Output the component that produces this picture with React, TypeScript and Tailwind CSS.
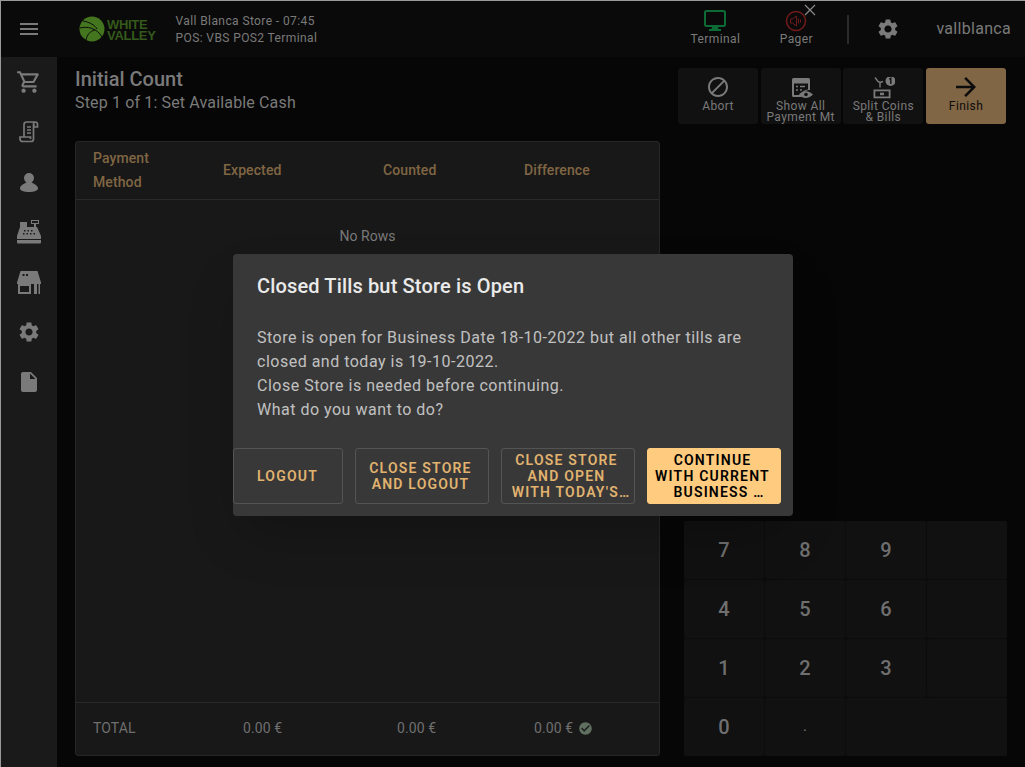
import { MdArrowForward, MdBlock, MdCheckCircle, MdInsertDriveFile, MdMenu, MdOutlineShoppingCart, MdSettings } from "react-icons/md";

function Logo() {
  return (
    <div className="flex items-center">
      <svg width="28" height="28" viewBox="0 0 28 28">
        <circle cx="14" cy="14" r="12.5" fill="#44761f" />
        <path d="M2 13c7-2 17 0 22 9M5 6c6 1 12 4 14 8M8 25c1-5 4-9 9-10" fill="none" stroke="#0a0a0a" strokeWidth="1" />
      </svg>
      <div className="mt-[2px] ml-[1px] font-['Liberation_Sans',sans-serif] text-[13px] leading-[11px] font-bold tracking-[-0.3px] text-[#34591b]">
        <div>WHITE</div>
        <div>VALLEY</div>
      </div>
    </div>
  );
}

function TerminalIcon() {
  return (
    <svg width="24" height="22" viewBox="0 0 24 22" fill="none">
      <rect x="2" y="1" width="20" height="15" rx="1.5" stroke="#0d6b35" strokeWidth="2" />
      <path d="M9 17h6l.5 2H18v2H6v-2h2.500z" fill="#0d6b35" />
    </svg>
  );
}

function PagerIcon() {
  return (
    <svg width="22" height="22" viewBox="0 0 22 22" fill="none">
      <circle cx="11" cy="11" r="9.5" stroke="#6e1a1a" strokeWidth="1.6" />
      <path d="M5.5 9v4h2l4 3V6l-4 3z" stroke="#6e1a1a" strokeWidth="1" />
      <path d="M13.500 8.500v5M15.500 9.500v3" stroke="#6e1a1a" strokeWidth="1" />
    </svg>
  );
}

function ReceiptIcon() {
  return (
    <svg width="20" height="22" viewBox="0 0 20 22" fill="none" stroke="#7a7a7a" strokeWidth="1.7">
      <path d="M5 16V3.500C5 2 6 1 7.500 1H16c1.400 0 2.500 1 2.500 2.500V6h-3.500V3.500M16 1c-1 0-1.500 1-1.500 2.500V18c0 1.500-1 2.500-2.500 2.500H3.500C2 20.500 1 19.500 1 18v-2h10.500v2" />
      <path d="M8 6h4M8 9h4M8 12h4" />
    </svg>
  );
}

function PersonIcon() {
  return (
    <svg width="18" height="20" viewBox="0 0 18 20" fill="#7a7a7a">
      <circle cx="9" cy="6" r="5" />
      <path d="M6.500 10h5c0 1.500 6.500 2.200 6.500 6.500 0 2.200-4 3.500-9 3.500s-9-1.300-9-3.500C0 12.200 6.500 11.500 6.500 10z" />
    </svg>
  );
}

function RegisterIcon() {
  return (
    <svg width="24" height="24" viewBox="0 0 24 24" fill="#7a7a7a">
      <path d="M3 2h7v5H3z" />
      <path fillRule="evenodd" d="M14 0h8v4h-3v3h-2V4h-3zM15 1v2h6V1z" />
      <path fillRule="evenodd" d="M3 7h17l4 9v3H0v-3zM7 10v1.500h1.500V10zM10.500 10v1.500H12V10zM14 10v1.500h1.500V10zM6 13v1.500h1.500V13zM9.500 13v1.500H11V13zM13 13v1.500h1.500V13zM16.500 13v1.500H18V13z" />
      <path d="M0 20h24v2.500a1 1 0 0 1-1 1H1a1 1 0 0 1-1-1z" />
    </svg>
  );
}

function StoreIcon() {
  return (
    <svg width="24" height="23" viewBox="0 0 24 23" fill="#7a7a7a">
      <path fillRule="evenodd" d="M3.500 0h17L24 11.500V13H0v-1.500zM5.500 3v2h2V3zM9 3v2h2V3z" />
      <path fillRule="evenodd" d="M1 13h13v10H1zM3 15v6h9v-6z" />
      <path d="M17 13h3v10h-3zM21.500 13H23v10h-1.500z" />
    </svg>
  );
}

function PaymentIcon() {
  return (
    <svg width="24" height="22" viewBox="0 0 24 22" fill="none">
      <path d="M3 2.500A1.500 1.500 0 0 1 4.500 1h15A1.500 1.500 0 0 1 21 2.500V13c-4 0-7 2-8.500 7h-8A1.500 1.500 0 0 1 3 18.500z" fill="#7a7a7a" />
      <path d="M5 6.500h14v6c-3 .3-6 2-7.500 5.500H5z" fill="#111111" />
      <path d="M7 9.500h2M11 9.500h5M7 13h2M11 13h2" stroke="#7a7a7a" strokeWidth="1.3" />
      <path d="M10 17.500c3-4.500 10-4.500 14 0-4 4.500-11 4.500-14 0z" fill="#7a7a7a" />
      <circle cx="17" cy="17.500" r="1.800" fill="#111111" />
    </svg>
  );
}

function SplitIcon() {
  return (
    <svg width="24" height="22" viewBox="0 0 24 22" fill="none">
      <path d="M4 0.500l3 4 2 1M9 5.500l3-1M9 5.500v5" stroke="#7a7a7a" strokeWidth="1.4" />
      <circle cx="19.500" cy="4" r="5" fill="#7a7a7a" />
      <path d="M18.200 2.200l1.600-.8v5.500" stroke="#111111" strokeWidth="1.4" />
      <rect x="3.400" y="13.400" width="15.200" height="7" stroke="#7a7a7a" strokeWidth="1.8" />
      <rect x="9" y="15.700" width="4" height="2.500" fill="#7a7a7a" />
    </svg>
  );
}

function ToolButton({ icon, label, finish }: { icon: React.ReactNode; label: string[]; finish?: boolean }) {
  return (
    <button className={`flex h-[56px] w-[80px] flex-col items-center rounded-[3px] ${finish ? "bg-[#806644] text-[#0c0c0c]" : "bg-[#111111] text-[#7a7a7a]"}`}>
      <div className="flex h-[31px] items-end justify-center">{icon}</div>
      <div className="mt-[2px] text-[12px] leading-[11px] tracking-[0.4px]">
        {label.map((l) => (
          <div key={l}>{l}</div>
        ))}
      </div>
    </button>
  );
}

function DialogButton({ lines, primary, width, lastClass }: { lines: string[]; primary?: boolean; width: string; lastClass?: string }) {
  return (
    <button
      className={`flex h-[56px] flex-col justify-center rounded-[3px] border text-center text-[14px] leading-[16px] font-semibold tracking-[1.2px] ${width} ${
        primary ? "border-[#ffcb7e] bg-[#ffcb7e] text-black" : "border-[#545454] text-[#e1b36f]"
      }`}
    >
      {lines.map((l, i) => (
        <div key={l} className={i === lines.length - 1 && lastClass ? lastClass : "pr-[3px]"}>
          {l}
        </div>
      ))}
    </button>
  );
}

export default function App() {
  const keys = ["7", "8", "9", "", "4", "5", "6", "", "1", "2", "3", ""];

  return (
    <div className="relative flex h-screen w-full flex-col overflow-hidden border-t border-l border-[#9a9a9a] bg-[#060606] font-['Roboto',sans-serif] text-[#7a7a7a]">
      {/* Header */}
      <header className="flex h-[56px] shrink-0 items-center bg-[#0a0a0a]">
        <div className="flex w-[56px] justify-center">
          <MdMenu size={24} />
        </div>
        <div className="ml-[21px]">
          <Logo />
        </div>
        <div className="mt-[2px] ml-[20px] text-[12px] leading-[17px] tracking-[0.4px]">
          <div>Vall Blanca Store - 07:45</div>
          <div>POS: VBS POS2 Terminal</div>
        </div>
        <div className="ml-auto flex items-center">
          <div className="flex w-[60px] -translate-y-[1px] flex-col items-center">
            <TerminalIcon />
            <span className="text-[12px] leading-[14px] tracking-[0.4px]">Terminal</span>
          </div>
          <div className="relative ml-[21px] flex w-[60px] -translate-y-[1px] flex-col items-center">
            <PagerIcon />
            <span className="text-[12px] leading-[14px] tracking-[0.4px]">Pager</span>
            <svg className="absolute top-[-7px] left-[37px]" width="14" height="14" viewBox="0 0 14 14" stroke="#8a8a8a" strokeWidth="1.2">
              <path d="M2 2l10 10M12 2L2 12" />
            </svg>
          </div>
          <div className="ml-[21px] h-[29px] w-[2px] bg-[#2a2a2a]" />
          <div className="ml-[27px]">
            <MdSettings size={24} />
          </div>
          <span className="mr-[14px] ml-[36px] text-[16px] tracking-[0.3px]">vallblanca</span>
        </div>
      </header>

      <div className="flex min-h-0 flex-1">
        {/* Sidebar */}
        <nav className="flex w-[56px] shrink-0 flex-col items-center bg-[#1a1a1a]">
          {[
            <MdOutlineShoppingCart size={26} color="#7a7a7a" />,
            <ReceiptIcon />,
            <PersonIcon />,
            <RegisterIcon />,
            <StoreIcon />,
            <MdSettings size={24} color="#7a7a7a" />,
            <MdInsertDriveFile size={24} color="#7a7a7a" />,
          ].map((icon, i) => (
            <div key={i} className="flex h-[50px] w-full items-center justify-center pr-[1px]">
              {icon}
            </div>
          ))}
        </nav>

        <main className="flex min-w-0 flex-1 flex-col px-[18px]">
          {/* Title row */}
          <div className="flex h-[84px] shrink-0 items-start justify-between">
            <div className="pt-[10px]">
              <div className="text-[20px] leading-[24px] font-medium">Initial Count</div>
              <div className="mt-[1px] text-[16px] leading-[22px] tracking-[0.15px]">Step 1 of 1: Set Available Cash</div>
            </div>
            <div className="mt-[11px] mr-[1px] flex gap-[2.67px]">
              <ToolButton icon={<MdBlock size={24} />} label={["Abort"]} />
              <ToolButton icon={<PaymentIcon />} label={["Show All", "Payment Mt"]} />
              <ToolButton icon={<SplitIcon />} label={["Split Coins", "& Bills"]} />
              <ToolButton finish icon={<MdArrowForward className="translate-y-[3px]" size={30} />} label={["Finish"]} />
            </div>
          </div>

          <div className="flex min-h-0 flex-1 pb-[11px]">
            {/* Table card */}
            <section className="flex w-[585px] shrink-0 flex-col rounded-[3px] border border-[#262626] bg-[#181818] text-[14px]">
              <div className="grid h-[58px] shrink-0 grid-cols-[131px_152px_152px_1fr] items-center border-b border-[#2a2a2a] font-medium tracking-[0.1px] text-[#806644]">
                <div className="-mt-[2px] pl-[17px] leading-[24px]">
                  Payment
                  <br />
                  Method
                </div>
                <div className="pl-[16px]">Expected</div>
                <div className="pl-[24px]">Counted</div>
                <div className="pl-[13px]">Difference</div>
              </div>
              <div className="flex-1 pt-[28px] text-center leading-[16px]">No Rows</div>
              <div className="grid h-[53px] shrink-0 grid-cols-[131px_152px_152px_1fr] items-center border-t border-[#2a2a2a] pb-[2px] tracking-[0.1px] text-[#6f6f6f]">
                <div className="pl-[17px]">TOTAL</div>
                <div className="pl-[36px]">0.00 €</div>
                <div className="pl-[38px]">0.00 €</div>
                <div className="flex items-center pl-[23px]">
                  0.00 €
                  <MdCheckCircle className="ml-[5px]" size={15} color="#5f6f60" />
                </div>
              </div>
            </section>

            {/* Keypad */}
            <div className="mt-auto ml-[24px] grid h-[235px] w-[323px] shrink-0 grid-cols-4 grid-rows-4 gap-[1px] bg-[#0c0c0c] text-[20px] font-medium text-[#6f6f6f]">
              {keys.map((k, i) => (
                <div key={i} className="flex items-center justify-center rounded-[2px] bg-[#111111]">
                  {k}
                </div>
              ))}
              <div className="flex items-center justify-center rounded-[2px] bg-[#111111]">0</div>
              <div className="flex items-center justify-center rounded-[2px] bg-[#111111] text-[12px]">.</div>
              <div className="col-span-2 rounded-[2px] bg-[#111111]" />
            </div>
          </div>
        </main>
      </div>

      {/* Dialog */}
      <div className="absolute inset-0 flex items-center justify-center pt-[1px]">
        <div className="h-[262px] w-[560px] rounded-[4px] bg-[#383838] shadow-2xl">
          <h2 className="px-[24px] pt-[20px] text-[20px] leading-[24px] font-medium tracking-[0.15px] text-white/90">Closed Tills but Store is Open</h2>
          <div className="px-[24px] pt-[28px] text-[16px] leading-[24px] tracking-[0.5px] text-white/70">
            <div>Store is open for Business Date 18-10-2022 but all other tills are</div>
            <div>closed and today is 19-10-2022.</div>
            <div>Close Store is needed before continuing.</div>
            <div>What do you want to do?</div>
          </div>
          <div className="mt-[26px] flex gap-[12px]">
            <DialogButton width="w-[110px]" lastClass="pr-[1px]" lines={["LOGOUT"]} />
            <DialogButton width="w-[134px]" lines={["CLOSE STORE", "AND LOGOUT"]} />
            <DialogButton width="w-[134px]" lastClass="pl-[6px]" lines={["CLOSE STORE", "AND OPEN", "WITH TODAY'S…"]} />
            <DialogButton primary width="w-[134px]" lastClass="pl-[10px]" lines={["CONTINUE", "WITH CURRENT", "BUSINESS …"]} />
          </div>
        </div>
      </div>
    </div>
  );
}
